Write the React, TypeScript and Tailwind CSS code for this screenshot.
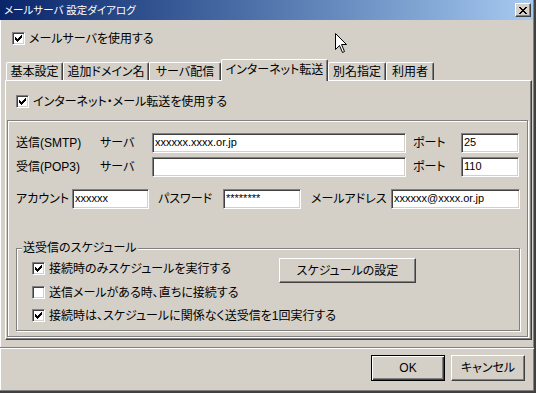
import React from "react";

const raised =
  "border border-t-white border-l-white border-r-[#404040] border-b-[#404040] shadow-[inset_-1px_-1px_0_#808080]";
const sunken =
  "border border-t-[#808080] border-l-[#808080] border-r-white border-b-white shadow-[inset_1px_1px_0_#404040,inset_-1px_-1px_0_#d4d0c8]";
const etched = "border border-[#808080] shadow-[inset_1px_1px_0_#fff,1px_1px_0_#fff]";

function Check({ checked }: { checked?: boolean }) {
  return (
    <span className={`relative block h-[13px] w-[13px] shrink-0 bg-white ${sunken}`}>
      {checked && (
        <svg
          className="absolute left-[2px] top-[2px]"
          width="7"
          height="7"
          viewBox="0 0 7 7"
          shapeRendering="crispEdges"
        >
          <path
            fill="#000"
            d="M6 0h1v3H6zM5 1h1v3H5zM4 2h1v3H4zM0 2h1v3H0zM1 3h1v3H1zM2 4h1v3H2zM3 3h1v3H3z"
          />
        </svg>
      )}
    </span>
  );
}

function CheckRow({ checked, label, className = "" }: { checked?: boolean; label: string; className?: string }) {
  return (
    <div className={`flex h-[13px] items-center gap-[4px] ${className}`}>
      <Check checked={checked} />
      <span className="whitespace-nowrap">{label}</span>
    </div>
  );
}

function Field({ w, value }: { w: string; value?: string }) {
  return (
    <div
      className={`h-[20px] shrink-0 overflow-hidden whitespace-nowrap bg-white pl-[2px] text-[11px] leading-[17px] ${w} ${sunken}`}
    >
      {value}
    </div>
  );
}

function Button({ label, w, isDefault }: { label: string; w: string; isDefault?: boolean }) {
  return (
    <div
      className={`flex h-[26px] items-center justify-center ${w} ${
        isDefault
          ? "border border-black shadow-[inset_1px_1px_0_#fff,inset_-1px_-1px_0_#404040,inset_-2px_-2px_0_#808080]"
          : raised
      }`}
    >
      {label}
    </div>
  );
}

const tabs = [
  { label: "基本設定", w: "w-[57px]" },
  { label: "追加ドメイン名", w: "w-[86px]" },
  { label: "サーバ配信", w: "w-[72px]" },
  { label: "インターネット転送", w: "w-[107px]", active: true },
  { label: "別名指定", w: "w-[58px]" },
  { label: "利用者", w: "w-[48px]" },
];

export default function App() {
  return (
    <div className="relative h-[393px] w-[536px] overflow-hidden border-b-2 border-r-2 border-[#404040] bg-[#d4d0c8] font-['Liberation_Sans','Noto_Sans_CJK_JP',sans-serif] text-[12px] leading-[14px] text-black shadow-[inset_-1px_-1px_0_#808080,inset_1px_0_0_#fff] [font-feature-settings:'palt']">
      {/* title bar */}
      <div className="mr-px flex h-[20px] items-center bg-gradient-to-r from-[#0a246a] to-[#a6caf0] pl-[4px] text-[10.5px] text-white">
        <span className="whitespace-nowrap">メールサーバ 設定ダイアログ</span>
        <div className={`ml-auto mr-[2px] flex h-[14px] w-[16px] items-center justify-center bg-[#d4d0c8] ${raised}`}>
          <svg width="8" height="7" viewBox="0 0 8 7" shapeRendering="crispEdges">
            <path
              fill="#000"
              d="M0 0h2v1H0zM6 0h2v1H6zM1 1h2v1H1zM5 1h2v1H5zM2 2h4v1H2zM3 3h2v1H3zM2 4h4v1H2zM1 5h2v1H1zM5 5h2v1H5zM0 6h2v1H0zM6 6h2v1H6z"
            />
          </svg>
        </div>
      </div>

      <CheckRow checked label="メールサーバを使用する" className="ml-[12px] mt-[12px]" />

      {/* tabs */}
      <div className="relative z-10 ml-[6px] mt-[14px] flex h-[21px] items-end">
        {tabs.map((t) =>
          t.active ? (
            <div
              key={t.label}
              className={`-mb-px flex h-[22px] items-start justify-center rounded-t-[2px] border-l border-r border-t border-l-white border-r-[#404040] border-t-white bg-[#d4d0c8] pt-[3px] shadow-[inset_-1px_0_0_#808080] ${t.w}`}
            >
              <span className="whitespace-nowrap">{t.label}</span>
            </div>
          ) : (
            <div
              key={t.label}
              className={`flex h-[18px] items-center justify-center rounded-t-[2px] border-l border-r border-t border-l-white border-r-[#404040] border-t-white shadow-[inset_-1px_0_0_#808080] ${t.w}`}
            >
              <span className="whitespace-nowrap">{t.label}</span>
            </div>
          )
        )}
      </div>

      {/* tab panel */}
      <div className={`ml-[5px] h-[260px] w-[527px] ${raised}`}>
        <CheckRow checked label="インターネット・メール転送を使用する" className="ml-[10px] mt-[14px]" />

        <div className={`ml-px mt-[12px] h-[217px] w-[521px] pl-[8px] pt-[12px] ${etched}`}>
          <div className="flex items-center">
            <span className="w-[84px] whitespace-nowrap">送信(SMTP)</span>
            <span className="w-[52px]">サーバ</span>
            <Field w="w-[254px]" value="xxxxxx.xxxx.or.jp" />
            <span className="ml-[7px] w-[48px]">ポート</span>
            <Field w="w-[58px]" value="25" />
          </div>
          <div className="mt-[4px] flex items-center">
            <span className="w-[84px] whitespace-nowrap">受信(POP3)</span>
            <span className="w-[52px]">サーバ</span>
            <Field w="w-[254px]" />
            <span className="ml-[7px] w-[48px]">ポート</span>
            <Field w="w-[58px]" value="110" />
          </div>
          <div className="mt-[12px] flex items-center">
            <span className="w-[56px] whitespace-nowrap">アカウント</span>
            <Field w="w-[77px]" value="xxxxxx" />
            <span className="ml-[9px] w-[65px] whitespace-nowrap">パスワード</span>
            <Field w="w-[78px]" value="********" />
            <span className="ml-[10px] w-[80px] whitespace-nowrap">メールアドレス</span>
            <Field w="w-[129px]" value="xxxxxx@xxxx.or.jp" />
          </div>

          <div className={`relative mt-[39px] h-[83px] w-[504px] pl-[15px] pt-[9px] ${etched}`}>
            <span className="absolute left-[5px] top-[-8px] bg-[#d4d0c8] px-px">送受信のスケジュール</span>
            <div className="flex w-[384px] items-start">
              <CheckRow checked label="接続時のみスケジュールを実行する" className="mt-[4px]" />
              <div className={`ml-auto flex h-[25px] w-[137px] items-center justify-center ${raised}`}>
                スケジュールの設定
              </div>
            </div>
            <CheckRow label="送信メールがある時、直ちに接続する" className="mt-[3px]" />
            <CheckRow checked label="接続時は、スケジュールに関係なく送受信を1回実行する" className="mt-[10px]" />
          </div>
        </div>
      </div>

      {/* bottom buttons */}
      <div className="mt-[7px] h-[2px] border-t border-b border-t-[#808080] border-b-white" />
      <div className="mt-[6px] flex justify-end gap-[6px] pr-[9px]">
        <Button label="OK" w="w-[74px]" isDefault />
        <Button label="キャンセル" w="w-[74px]" />
      </div>

      {/* mouse pointer */}
      <svg className="absolute left-[335px] top-[33px]" width="13" height="21" viewBox="0 0 13 21">
        <path d="M0.5 0.5 V16.5 L4.5 12.5 L7.5 19.5 L9.5 18.5 L6.5 11.5 H11.5 Z" fill="#fff" stroke="#000" strokeWidth="1" />
      </svg>
    </div>
  );
}
